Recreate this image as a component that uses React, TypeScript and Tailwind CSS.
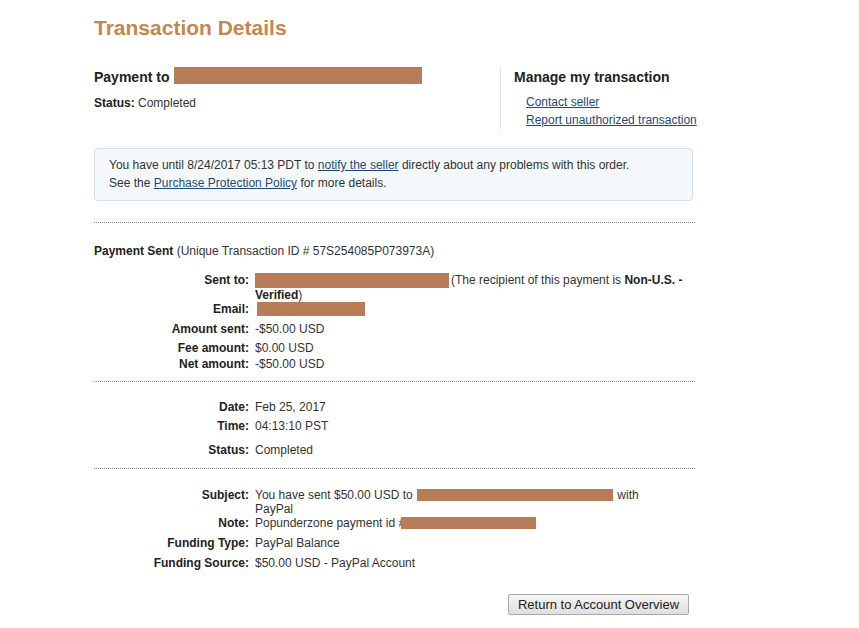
import React from 'react'

const Redacted = ({ className = '' }: { className?: string }) => (
  <span className={`inline-block bg-[#b97c58] align-top ${className}`} />
)

interface Row {
  label: string
  value: React.ReactNode
  mt: string
}

const DetailRows = ({ rows }: { rows: Row[] }) => (
  <div className="flex flex-col">
    {rows.map((row) => (
      <div key={row.label} className={`grid grid-cols-[155px_1fr] gap-x-[6px] ${row.mt}`}>
        <div className="text-right font-bold text-[#222]">{row.label}</div>
        <div>{row.value}</div>
      </div>
    ))}
  </div>
)

const Divider = ({ className = '' }: { className?: string }) => (
  <div className={`border-t border-dotted border-[#8a8a8a] ${className}`} />
)

export default function App() {
  const paymentRows: Row[] = [
    {
      label: 'Sent to:',
      mt: 'mt-[15px]',
      value: (
        <>
          <Redacted className="w-[194px] h-[15px] mr-[2px]" />
          (The recipient of this payment is <b className="text-[#222]">Non-U.S. -</b>
          <br />
          <b className="text-[#222]">Verified</b>)
        </>
      ),
    },
    { label: 'Email:', mt: 'mt-0', value: <Redacted className="w-[108px] h-[14px] ml-[2px]" /> },
    { label: 'Amount sent:', mt: 'mt-[6px]', value: '-$50.00 USD' },
    { label: 'Fee amount:', mt: 'mt-[5px]', value: '$0.00 USD' },
    { label: 'Net amount:', mt: 'mt-[2px]', value: '-$50.00 USD' },
  ]

  const dateRows: Row[] = [
    { label: 'Date:', mt: 'mt-0', value: 'Feb 25, 2017' },
    { label: 'Time:', mt: 'mt-[5px]', value: '04:13:10 PST' },
    { label: 'Status:', mt: 'mt-[10px]', value: 'Completed' },
  ]

  const fundingRows: Row[] = [
    {
      label: 'Subject:',
      mt: 'mt-0',
      value: (
        <>
          You have sent $50.00 USD to <Redacted className="w-[196px] h-[12px] mt-[1px] mx-[1px]" /> with
          <br />
          PayPal
        </>
      ),
    },
    {
      label: 'Note:',
      mt: 'mt-0',
      value: (
        <>
          Popunderzone payment id #
          <Redacted className="w-[135px] h-[12px] mt-[1px] ml-[-4px]" />
        </>
      ),
    },
    { label: 'Funding Type:', mt: 'mt-[6px]', value: 'PayPal Balance' },
    { label: 'Funding Source:', mt: 'mt-[6px]', value: '$50.00 USD - PayPal Account' },
  ]

  return (
    <div className="min-h-screen bg-white font-['Liberation_Sans',Arial,sans-serif] text-[12px] leading-[14px] text-[#333]">
      <div className="w-[601px] ml-[94px] pt-[16px] pb-[13px]">
        <h1 className="text-[21px] leading-[24px] font-bold text-[#c5874f]">Transaction Details</h1>

        {/* Header */}
        <div className="flex mt-[28px]">
          <div className="w-[406px] shrink-0">
            <div className="text-[14px] leading-[18px] font-bold text-[#222]">
              Payment to <Redacted className="w-[248px] h-[17px] ml-[1px] -mt-[1px]" />
            </div>
            <div className="mt-[10px]">
              <b className="text-[#222]">Status:</b> Completed
            </div>
          </div>
          <div className="shrink-0 whitespace-nowrap border-l border-[#e2e2e2] pl-[13px] pb-[3px]">
            <div className="text-[14px] leading-[18px] font-bold text-[#222]">Manage my transaction</div>
            <div className="pl-[12px] flex flex-col items-start">
              <a href="#" className="mt-[9px] underline text-[#1e4a78]">Contact seller</a>
              <a href="#" className="mt-[4px] underline text-[#1e4a78]">Report unauthorized transaction</a>
            </div>
          </div>
        </div>

        {/* Notice */}
        <div className="mt-[18px] w-[599px] border border-[#d3dee6] rounded-[4px] bg-[#f4f8fa] pt-[7px] pb-[8px] px-[14px] leading-[18px]">
          <p>
            You have until 8/24/2017 05:13 PDT to{' '}
            <a href="#" className="underline text-[#1e4a78]">notify the seller</a> directly about any problems with this order.
          </p>
          <p>
            See the <a href="#" className="underline text-[#1e4a78]">Purchase Protection Policy</a> for more details.
          </p>
        </div>

        <Divider className="mt-[21px]" />

        <div className="mt-[21px]">
          <b className="text-[#222]">Payment Sent</b> (Unique Transaction ID # 57S254085P073973A)
        </div>
        <DetailRows rows={paymentRows} />

        <Divider className="mt-[10px]" />
        <div className="mt-[18px]">
          <DetailRows rows={dateRows} />
        </div>

        <Divider className="mt-[11px]" />
        <div className="mt-[19px]">
          <DetailRows rows={fundingRows} />
        </div>

        <div className="flex justify-end mt-[24px] pr-[6px]">
          <button className="h-[21px] w-[181px] border border-[#a9a9a9] rounded-[2px] bg-gradient-to-b from-[#f6f6f6] to-[#dedede] text-[13px] leading-[19px] text-[#222]">
            Return to Account Overview
          </button>
        </div>
      </div>
    </div>
  )
}
